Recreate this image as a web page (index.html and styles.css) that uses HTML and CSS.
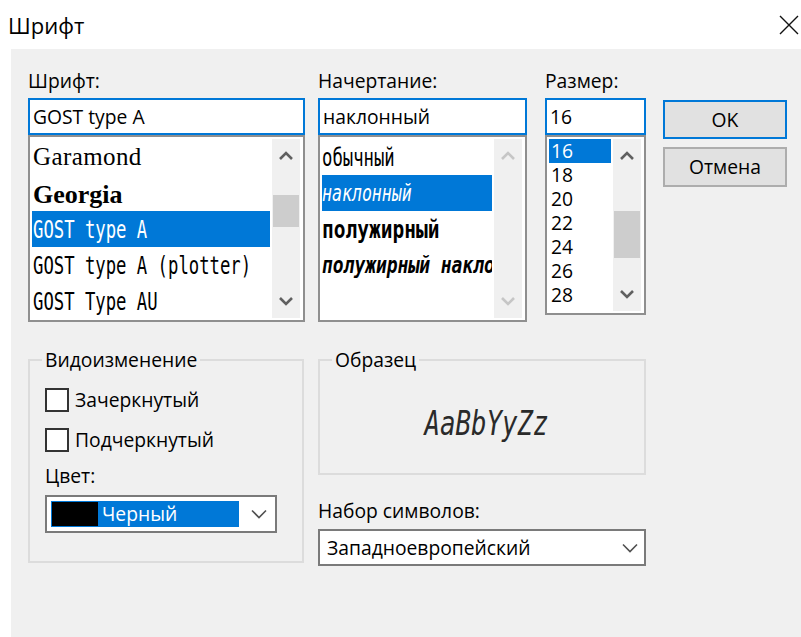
FILE: index.html
```html
<!DOCTYPE html>
<html lang="ru">
<head>
<meta charset="utf-8">
<title>Шрифт</title>
<link rel="stylesheet" href="styles.css">
</head>
<body>
<div class="dialog">
  <header class="titlebar">
    <span class="title">Шрифт</span>
    <svg class="close" width="20" height="20" viewBox="0 0 20 20" aria-hidden="true">
      <path d="M1 1 L19 19 M19 1 L1 19" stroke="#111" stroke-width="1.4" fill="none"/>
    </svg>
  </header>

  <main class="panel">
    <section class="top">
      <div class="col col-font">
        <div class="label">Шрифт:</div>
        <div class="input">GOST type A</div>
        <div class="list">
          <div class="items">
            <div class="row row-garamond">Garamond</div>
            <div class="row row-georgia">Georgia</div>
            <div class="row row-gost selected"><span class="gost">GOST type A</span></div>
            <div class="row row-gost"><span class="gost">GOST type A (plotter)</span></div>
            <div class="row row-gost"><span class="gost">GOST Type AU</span></div>
          </div>
          <div class="scrollbar">
            <div class="arrow"><svg width="16" height="10" viewBox="0 0 16 10"><polyline points="2,8 8,2 14,8" /></svg></div>
            <div class="track"><div class="thumb thumb-font"></div></div>
            <div class="arrow"><svg width="16" height="10" viewBox="0 0 16 10"><polyline points="2,2 8,8 14,2" /></svg></div>
          </div>
        </div>
      </div>

      <div class="col col-style">
        <div class="label">Начертание:</div>
        <div class="input">наклонный</div>
        <div class="list">
          <div class="items">
            <div class="row row-style"><span class="gost">обычный</span></div>
            <div class="row row-style selected"><span class="gost italic">наклонный</span></div>
            <div class="row row-style"><span class="gost bold">полужирный</span></div>
            <div class="row row-style"><span class="gost bold italic">полужирный наклонный</span></div>
          </div>
          <div class="scrollbar disabled">
            <div class="arrow"><svg width="16" height="10" viewBox="0 0 16 10"><polyline points="2,8 8,2 14,8" /></svg></div>
            <div class="track"></div>
            <div class="arrow"><svg width="16" height="10" viewBox="0 0 16 10"><polyline points="2,2 8,8 14,2" /></svg></div>
          </div>
        </div>
      </div>

      <div class="col col-size">
        <div class="label">Размер:</div>
        <div class="input">16</div>
        <div class="list list-size">
          <div class="items">
            <div class="row row-size selected">16</div>
            <div class="row row-size">18</div>
            <div class="row row-size">20</div>
            <div class="row row-size">22</div>
            <div class="row row-size">24</div>
            <div class="row row-size">26</div>
            <div class="row row-size">28</div>
          </div>
          <div class="scrollbar">
            <div class="arrow"><svg width="16" height="10" viewBox="0 0 16 10"><polyline points="2,8 8,2 14,8" /></svg></div>
            <div class="track"><div class="thumb thumb-size"></div></div>
            <div class="arrow"><svg width="16" height="10" viewBox="0 0 16 10"><polyline points="2,2 8,8 14,2" /></svg></div>
          </div>
        </div>
      </div>

      <div class="buttons">
        <button class="btn btn-default">OK</button>
        <button class="btn">Отмена</button>
      </div>
    </section>

    <section class="bottom">
      <fieldset class="group group-effects">
        <legend>Видоизменение</legend>
        <label class="check"><span class="box"></span>Зачеркнутый</label>
        <label class="check"><span class="box"></span>Подчеркнутый</label>
        <div class="label label-color">Цвет:</div>
        <div class="combo combo-color">
          <div class="color-sel"><span class="swatch"></span><span>Черный</span></div>
          <svg class="chev" width="16" height="10" viewBox="0 0 16 10"><polyline points="1,1.5 8,8.5 15,1.5" /></svg>
        </div>
      </fieldset>

      <div class="col-right">
        <fieldset class="group group-sample">
          <legend>Образец</legend>
          <div class="sample"><span>AaBbYyZz</span></div>
        </fieldset>
        <div class="label label-charset">Набор символов:</div>
        <div class="combo combo-charset">
          <span>Западноевропейский</span>
          <svg class="chev" width="16" height="10" viewBox="0 0 16 10"><polyline points="1,1.5 8,8.5 15,1.5" /></svg>
        </div>
      </div>
    </section>
  </main>
</div>
</body>
</html>
```
FILE: styles.css
```css
* { box-sizing: border-box; }

html, body {
  margin: 0;
  padding: 0;
  background: #fff;
}

body {
  font-family: "Open Sans", "Liberation Sans", sans-serif;
  font-size: 19.3px;
  line-height: 24px;
  color: #000;
  width: 801px;
  height: 637px;
  overflow: hidden;
}

.dialog {
  display: flex;
  flex-direction: column;
  height: 637px;
}

/* ---- title bar ---- */
.titlebar {
  height: 49px;
  display: flex;
  align-items: center;
  justify-content: space-between;
  padding: 0 2px 0 8px;
  background: #fff;
}

.title {
  font-size: 22px;
  line-height: 26px;
}

.close { display: block; }

/* ---- client area ---- */
.panel {
  flex: 1;
  margin-left: 11px;
  background: #f0f0f0;
  padding: 20px 0 0 17px;
}

.top {
  display: flex;
  align-items: flex-start;
}

.col-font  { width: 277px; margin-right: 13px; }
.col-style { width: 209px; margin-right: 18px; }
.col-size  { width: 101px; margin-right: 17px; }

.label {
  height: 24px;
  line-height: 24px;
  margin-bottom: 5px;
  white-space: nowrap;
}

.input {
  height: 37px;
  border: 2px solid #0078d7;
  background: #fff;
  padding-left: 3px;
  line-height: 33px;
  white-space: nowrap;
  overflow: hidden;
}

.list {
  display: flex;
  height: 187px;
  border: 2px solid #8f8f8f;
  background: #fff;
  padding: 2px 3px 2px 2px;
}

.list-size { height: 180px; }

.items {
  flex: 1;
  min-width: 0;
  overflow: hidden;
}

.row {
  display: flex;
  align-items: center;
  white-space: nowrap;
  padding-left: 1px;
}

.row.selected {
  background: #0078d7;
  color: #fff;
}

.row-garamond {
  height: 36px;
  font-family: "Liberation Serif", serif;
  font-size: 25px;
  letter-spacing: 0.4px;
}

.row-georgia {
  height: 36px;
  font-family: "Liberation Serif", serif;
  font-weight: bold;
  font-size: 26px;
  padding-top: 4px;
}

.row-gost { height: 36px; }
.row-style { height: 36px; padding-left: 0; }

.row-size {
  height: 24px;
  padding-left: 2px;
  line-height: 20px;
}

/* narrow drafting face for the GOST entries */
.gost {
  display: inline-block;
  font-family: "DejaVu Sans Mono", monospace;
  font-size: 25px;
  line-height: 1;
  transform: scaleX(0.69);
  transform-origin: 0 50%;
}

.gost.italic { font-style: italic; font-size: 23px; transform: scaleX(0.72); }
.gost.bold { font-weight: bold; transform: scaleX(0.78); }

/* ---- scrollbars ---- */
.scrollbar {
  width: 28px;
  margin-left: 2px;
  display: flex;
  flex-direction: column;
  background: #f0f0f0;
}

.arrow {
  height: 34px;
  display: flex;
  align-items: center;
  justify-content: center;
}

.arrow svg polyline {
  fill: none;
  stroke: #606060;
  stroke-width: 2.6;
}

.scrollbar.disabled .arrow svg polyline { stroke: #c6c6c6; }

.track { flex: 1; }

.thumb {
  background: #cdcdcd;
  margin: 0 1px;
}

.thumb-font { margin-top: 22px; height: 32px; }
.thumb-size { margin-top: 38px; height: 47px; }

/* ---- buttons ---- */
.buttons {
  width: 124px;
  padding-top: 31px;
  display: flex;
  flex-direction: column;
}

.btn {
  font: inherit;
  color: #000;
  height: 40px;
  background: #e1e1e1;
  border: 2px solid #adadad;
  padding: 0;
  margin: 0 0 8px 0;
}

.btn-default {
  height: 39px;
  border-color: #0078d7;
}

/* ---- lower half ---- */
.bottom {
  display: flex;
  align-items: flex-start;
  margin-top: 26px;
}

.group {
  margin: 0;
  border: 2px solid #dcdcdc;
  padding: 0 15px;
  min-width: 0;
}

.group legend {
  padding: 0 3px;
  margin-left: -3px;
  line-height: 24px;
}

.group-effects {
  width: 276px;
  height: 215px;
  margin-right: 14px;
  padding-top: 16px;
}

.check {
  display: flex;
  align-items: center;
  height: 24px;
  margin-bottom: 16px;
}

.box {
  width: 24px;
  height: 24px;
  border: 2px solid #333;
  background: #fff;
  margin-right: 6px;
  flex: none;
}

.label-color { margin-top: -4px; margin-bottom: 7px; }

.combo {
  display: flex;
  align-items: center;
  background: #fff;
  border: 2px solid #7a7a7a;
  white-space: nowrap;
}

.combo-color {
  width: 232px;
  height: 38px;
  padding: 0 0 0 4px;
}

.color-sel {
  display: flex;
  align-items: center;
  width: 188px;
  height: 26px;
  background: #0078d7;
  color: #fff;
  padding: 1px;
}

.swatch {
  width: 46px;
  height: 24px;
  background: #000;
  margin-right: 4px;
}

.chev {
  margin-left: auto;
  margin-right: 8px;
}

.chev polyline {
  fill: none;
  stroke: #505050;
  stroke-width: 1.6;
}

.col-right { width: 328px; }

.group-sample {
  height: 127px;
  display: flex;
}

.sample {
  height: 103px;
  display: flex;
  align-items: center;
  justify-content: center;
  width: 100%;
  padding-left: 8px;
}

.sample span {
  display: inline-block;
  font-family: "DejaVu Sans Mono", monospace;
  font-style: italic;
  font-size: 33px;
  line-height: 1;
  color: #2a2a2a;
  transform: scaleX(0.78);
}

.label-charset { margin-top: 24px; margin-bottom: 6px; }

.combo-charset {
  height: 37px;
  padding-left: 7px;
}

.combo-charset .chev { margin-right: 6px; }
```
